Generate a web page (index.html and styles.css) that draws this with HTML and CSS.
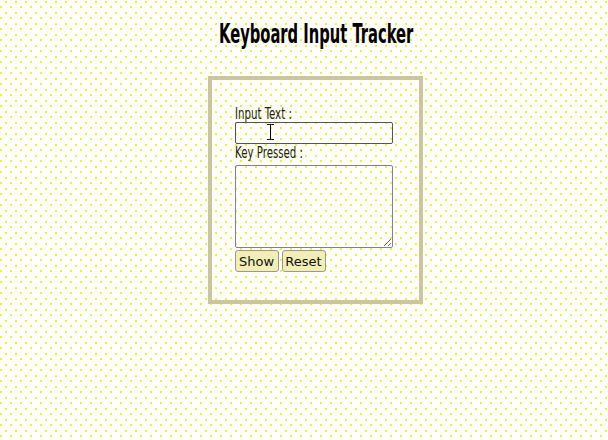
FILE: index.html
```html
<!DOCTYPE html>
<html>
<head>
<meta charset="utf-8">
<link rel="stylesheet" href="styles.css">
</head>
<body>
<div class="page">
  <h1 class="title"><span class="squeeze title-text">Keyboard Input Tracker</span></h1>
  <div class="box">
    <label class="label"><span class="squeeze">Input Text :</span></label>
    <div class="field-wrap">
      <input class="field" type="text">
      <svg class="cursor" width="9" height="16" viewBox="0 0 9 16"><path d="M1 0.5h2.5M5.5 0.5H8M4.5 1v14M1 15.5h2.5M5.5 15.5H8M3.5 0.5h2M3.5 15.5h2" stroke="#000" stroke-width="1" fill="none"/></svg>
    </div>
    <label class="label"><span class="squeeze">Key Pressed :</span></label>
    <textarea class="area"></textarea>
    <div class="buttons">
      <button class="btn">Show</button>
      <button class="btn">Reset</button>
    </div>
  </div>
</div>
</body>
</html>
```
FILE: styles.css
```css
html, body {
  margin: 0;
  padding: 0;
}
body {
  background-color: #ffffff;
  background-image:
    radial-gradient(circle at 1px 1px, #f4ea3c 0.9px, transparent 1.1px),
    radial-gradient(circle at 1px 1px, #f4ea3c 0.9px, transparent 1.1px);
  background-size: 10px 11px;
  background-position: 5px 1px, 0px 6px;
  height: 440px;
}
.page {
  padding-left: 22px;
  padding-top: 19px;
  display: flex;
  flex-direction: column;
  align-items: center;
}
.squeeze {
  display: inline-block;
  transform-origin: left center;
}
.title {
  margin: 0;
  width: 193px;
  white-space: nowrap;
  font-family: "DejaVu Sans Condensed", "DejaVu Sans", sans-serif;
  font-stretch: condensed;
  font-weight: bold;
  font-size: 26px;
  line-height: 31px;
  color: #000;
}
.title-text {
  transform: scaleX(0.63);
}
.box {
  margin-top: 26px;
  width: 158px;
  border: 4px solid #c9c6a0;
  padding: 25px 26px 28px 23px;
  display: flex;
  flex-direction: column;
  align-items: flex-start;
}
.label {
  white-space: nowrap;
  font-family: "DejaVu Sans Condensed", "DejaVu Sans", sans-serif;
  font-stretch: condensed;
  font-size: 16px;
  line-height: 17px;
  color: #222200;
}
.label .squeeze {
  transform: scaleX(0.71);
}
.field-wrap {
  position: relative;
  width: 158px;
  height: 22px;
}
.field {
  box-sizing: border-box;
  width: 158px;
  height: 22px;
  margin: 0;
  border: 1px solid #555;
  border-radius: 2px;
  background: transparent;
  padding: 0;
}
.cursor {
  position: absolute;
  left: 31px;
  top: 2px;
}
.area {
  box-sizing: border-box;
  width: 158px;
  height: 83px;
  margin: 4px 0 0 0;
  border: 1px solid #7f7f9f;
  border-radius: 2px;
  background: transparent;
  padding: 0;
}
.buttons {
  display: flex;
  gap: 3px;
  margin-top: 2px;
}
.btn {
  box-sizing: border-box;
  width: 44px;
  height: 22px;
  padding: 0;
  font-family: "DejaVu Sans", "Liberation Sans", sans-serif;
  font-size: 13px;
  color: #111;
  background: #f3eeb6;
  border: 1px solid #9a9a8a;
  border-radius: 3px;
}
```
